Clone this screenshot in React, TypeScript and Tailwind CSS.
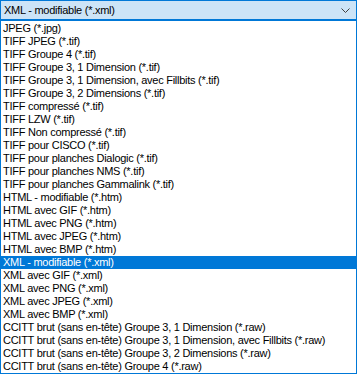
const items = [
  "JPEG (*.jpg)",
  "TIFF JPEG (*.tif)",
  "TIFF Groupe 4 (*.tif)",
  "TIFF Groupe 3, 1 Dimension (*.tif)",
  "TIFF Groupe 3, 1 Dimension, avec Fillbits (*.tif)",
  "TIFF Groupe 3, 2 Dimensions (*.tif)",
  "TIFF compressé (*.tif)",
  "TIFF LZW (*.tif)",
  "TIFF Non compressé (*.tif)",
  "TIFF pour CISCO (*.tif)",
  "TIFF pour planches Dialogic (*.tif)",
  "TIFF pour planches NMS (*.tif)",
  "TIFF pour planches Gammalink (*.tif)",
  "HTML - modifiable (*.htm)",
  "HTML avec GIF (*.htm)",
  "HTML avec PNG (*.htm)",
  "HTML avec JPEG (*.htm)",
  "HTML avec BMP (*.htm)",
  "XML - modifiable (*.xml)",
  "XML avec GIF (*.xml)",
  "XML avec PNG (*.xml)",
  "XML avec JPEG (*.xml)",
  "XML avec BMP (*.xml)",
  "CCITT brut (sans en-tête) Groupe 3, 1 Dimension (*.raw)",
  "CCITT brut (sans en-tête) Groupe 3, 1 Dimension, avec Fillbits (*.raw)",
  "CCITT brut (sans en-tête) Groupe 3, 2 Dimensions (*.raw)",
  "CCITT brut (sans en-tête) Groupe 4 (*.raw)",
]

export default function App() {
  const selected = "XML - modifiable (*.xml)"

  return (
    <div className="w-[358px] h-[374px] bg-white font-['Liberation_Sans',Arial,sans-serif] text-[11px] tracking-[-0.26px] text-black">
      {/* combo header */}
      <div className="flex h-[20px] w-[357px] items-center justify-between border border-[#0078d7] bg-[#cce4f7] pl-[3px] pr-[6px]">
        <span className="leading-[13px]">{selected}</span>
        <svg width="9" height="5" viewBox="0 0 9 5" className="mt-[1px]">
          <path d="M0.5 0.5 L4.5 4.5 L8.5 0.5" fill="none" stroke="#404040" strokeWidth="1" />
        </svg>
      </div>

      {/* dropdown list */}
      <div className="flex w-[357px] flex-col border border-[#0078d7] pt-[1px]">
        {items.map((item) => (
          <div
            key={item}
            className={
              item === selected
                ? "h-[13px] whitespace-nowrap bg-[#0078d7] pl-[2px] leading-[13px] text-white"
                : "h-[13px] whitespace-nowrap pl-[2px] leading-[13px]"
            }
          >
            {item}
          </div>
        ))}
      </div>
    </div>
  )
}
